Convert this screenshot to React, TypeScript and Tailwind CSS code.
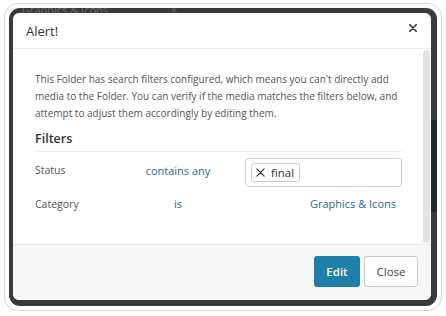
import React from "react";

export default function App() {
  return (
    <div className="w-[446px] h-[316px] bg-white overflow-hidden" style={{ fontFamily: '"Open Sans", "Liberation Sans", sans-serif' }}>
      <div className="ml-[4px] mt-[3px] w-[438px] h-[308px] rounded-[14px] border border-[#d6d6d6] bg-white p-[4px]">
        <div className="relative w-[428px] h-[298px] rounded-[11px] bg-[#3a3a3a] pl-[4px] pt-[5px] overflow-hidden">
          <div className="absolute left-[13px] top-[-6px] text-[11px] text-[#6a6a6a] whitespace-nowrap">Graphics &amp; Icons</div>
          <div className="absolute left-[162px] top-[-6px] text-[11px] text-[#6a6a6a]">×</div>
          <div className="absolute right-0 top-[112px] w-[6px] h-[92px] bg-[#1c2a24]" />
          <div className="relative w-[418px] h-[287px] rounded-[6px] bg-white flex flex-col overflow-hidden">
            {/* Header */}
            <div className="h-[36px] shrink-0 flex items-center justify-between border-b border-[#ececec] pl-[13px] pr-[14px]">
              <span className="text-[13px] text-[#333] leading-none mt-[2px]">Alert!</span>
              <svg width="8" height="8" viewBox="0 0 10 10" className="mt-[-5px]">
                <path d="M1 1L9 9M9 1L1 9" stroke="#333" strokeWidth="2" strokeLinecap="round" />
              </svg>
            </div>
            {/* Body */}
            <div className="flex-1 flex flex-row">
              <div className="flex-1 pl-[22px] pr-[21px] pt-[22px]">
                <p className="text-[10px] leading-[17px] text-[#555]">
                  This Folder has search filters configured, which means you can't directly add media to the Folder. You can verify if the media matches the filters below, and attempt to adjust them accordingly by editing them.
                </p>
                <div className="mt-[8px] pb-[3px] border-b border-[#ececec] text-[12.5px] font-semibold text-[#333] leading-[18px]">Filters</div>
                <div className="grid grid-cols-[76px_126px_1fr] gap-x-[4px] items-center">
                  <div className="text-[10.5px] text-[#555] h-[37px] flex items-center pt-[1px]">Status</div>
                  <div className="text-[11px] text-[#2b6a8f] h-[37px] flex items-center justify-center pt-[1px]">contains any</div>
                  <div className="pt-[6px] pb-[2px]">
                    <div className="h-[29px] rounded-[4px] border border-[#cfcfcf] flex items-center pl-[5px]">
                      <div className="h-[19px] flex items-center gap-[6px] rounded-[3px] border border-[#cfcfcf] pl-[4px] pr-[5px]">
                        <svg width="9" height="9" viewBox="0 0 10 10">
                          <path d="M1 1L9 9M9 1L1 9" stroke="#333" strokeWidth="1.3" strokeLinecap="round" />
                        </svg>
                        <span className="text-[11.5px] text-[#333] leading-none">final</span>
                      </div>
                    </div>
                  </div>
                  <div className="text-[10.5px] text-[#555] h-[31px] flex items-center">Category</div>
                  <div className="text-[11px] text-[#2b6a8f] h-[31px] flex items-center justify-center">is</div>
                  <div className="text-[11px] text-[#2b6a8f] pr-[6px] h-[31px] flex items-center justify-end">Graphics &amp; Icons</div>
                </div>
              </div>
              <div className="w-[7px] mr-[1px] mt-[1px] mb-[1px] rounded-full bg-[#e3e3e3]" />
            </div>
            {/* Footer */}
            <div className="h-[56px] shrink-0 bg-[#f7f7f7] border-t border-[#e8e8e8] flex items-center justify-end gap-[4px] pr-[13px] pb-[2px]">
              <button className="h-[31px] w-[46px] rounded-[3px] bg-[#1e7fa8] text-white text-[11.5px] font-semibold">Edit</button>
              <button className="h-[31px] w-[54px] rounded-[3px] bg-white border border-[#cacaca] text-[#444] text-[11.5px]">Close</button>
            </div>
          </div>
        </div>
      </div>
    </div>
  );
}
